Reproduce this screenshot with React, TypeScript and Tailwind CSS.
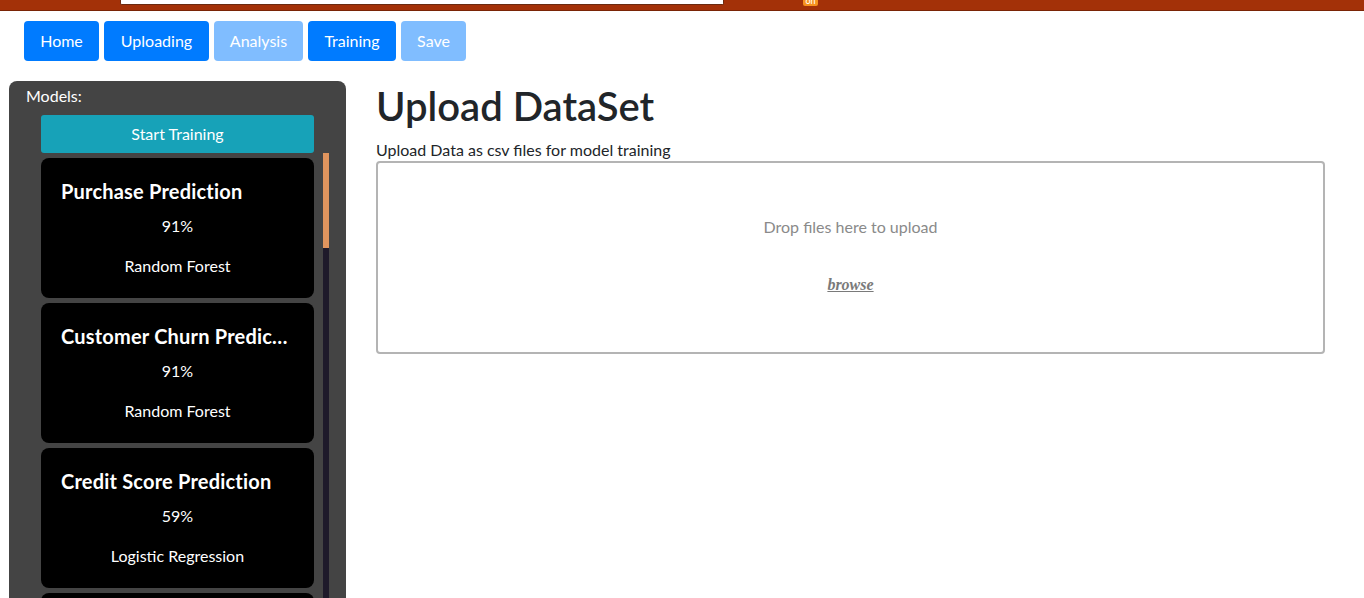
import React from "react";

const models = [
  { name: "Purchase Prediction", acc: "91%", algo: "Random Forest" },
  { name: "Customer Churn Prediction", acc: "91%", algo: "Random Forest" },
  { name: "Credit Score Prediction", acc: "59%", algo: "Logistic Regression" },
  { name: "Loan Default Prediction", acc: "80%", algo: "Decision Tree" },
];

export default function App() {
  const font = { fontFamily: '"Segoe UI", Lato, "Noto Sans", sans-serif' };
  return (
    <div className="w-[1364px] h-[598px] overflow-hidden bg-white text-[#212529]" style={font}>
      {/* top browser strip */}
      <div className="h-[11px] bg-[#a33108] border-b border-[#7a2406] flex items-start">
        <div className="ml-[120px] w-[604px] h-[5px] bg-white rounded-b-[2px] border-x border-b border-[#6b2a10]" />
        <div className="ml-[79px] w-[15px] h-[6px] bg-[#f7931e] rounded-b-[2px] overflow-hidden flex justify-center">
          <span className="text-[9px] leading-none text-white -mt-[4px]">on</span>
        </div>
      </div>

      {/* nav buttons */}
      <div className="flex gap-[5px] pl-[24px] mt-[10px]">
        {[
          { t: "Home", on: true, w: "w-[75px]" },
          { t: "Uploading", on: true, w: "w-[105px]" },
          { t: "Analysis", on: false, w: "w-[89px]" },
          { t: "Training", on: true, w: "w-[88px]" },
          { t: "Save", on: false, w: "w-[65px]" },
        ].map((b) => (
          <button
            key={b.t}
            className={`${b.w} h-[40px] rounded-[4px] text-white text-[16px] flex items-center justify-center ${
              b.on ? "bg-[#007bff]" : "bg-[#80bdff]"
            }`}
          >
            {b.t}
          </button>
        ))}
      </div>

      <div className="flex mt-[20px]">
        {/* sidebar */}
        <div className="ml-[9px] w-[337px] h-[520px] bg-[#444444] rounded-t-[8px] flex flex-col">
          <div className="pl-[17px] pt-[3px] text-white text-[16px] leading-[24px]">Models:</div>
          <div className="ml-[32px] mt-[7px] w-[273px] h-[38px] bg-[#17a2b8] rounded-[3px] text-white text-[16px] flex items-center justify-center">
            Start Training
          </div>
          <div className="flex ml-[32px] flex-1 min-h-0">
            <div className="w-[273px] flex flex-col gap-[5px] pt-[5px] overflow-hidden">
              {models.map((m) => (
                <div
                  key={m.name}
                  className="h-[140px] shrink-0 bg-black rounded-[8px] px-[20px] pt-[20px] text-white flex flex-col"
                >
                  <div className="text-[20px] font-bold leading-[26px] truncate tracking-[0.2px]">{m.name}</div>
                  <div className="text-center text-[16px] leading-[24px] mt-[10px]">{m.acc}</div>
                  <div className="text-center text-[16px] leading-[24px] mt-[16px]">{m.algo}</div>
                </div>
              ))}
            </div>
            <div className="ml-[9px] w-[6px] bg-[#1e1a2a] flex flex-col">
              <div className="h-[95px] bg-[#e0955e]" />
            </div>
          </div>
        </div>

        {/* main */}
        <div className="ml-[30px] w-[949px] pt-[1px]">
          <h1 className="text-[40px] font-semibold leading-[48px] mb-[8px]">Upload DataSet</h1>
          <p className="text-[16px] leading-[23px]">Upload Data as csv files for model training</p>
          <div className="h-[193px] border-2 border-[#b4b4b4] rounded-[4px] flex flex-col items-center">
            <div className="mt-[52px] text-[16px] leading-[24px] text-[#8a8a8a]">Drop files here to upload</div>
            <div
              className="mt-[34px] text-[16px] leading-[24px] text-[#7a7a7a] italic font-bold underline"
              style={{ fontFamily: '"Liberation Serif", serif' }}
            >
              browse
            </div>
          </div>
        </div>
      </div>
    </div>
  );
}
